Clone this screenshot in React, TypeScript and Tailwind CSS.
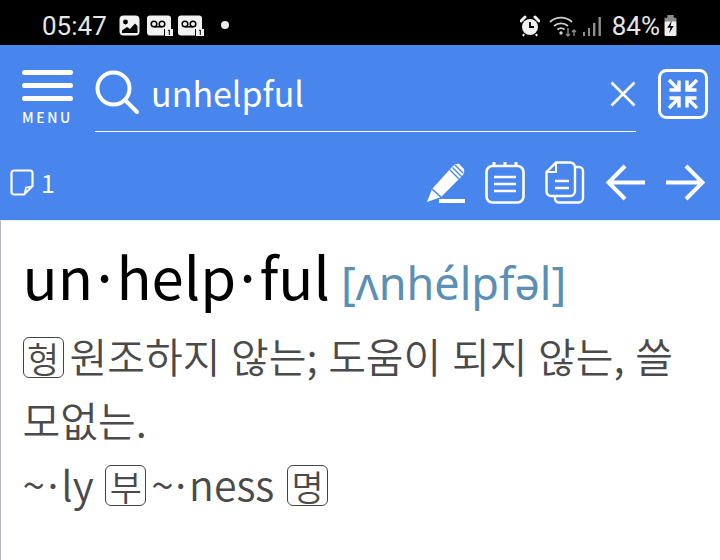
function Tag({ children }: { children: string }) {
  return (
    <span className="inline-flex items-center justify-center w-[41px] h-[41px] border-[1.5px] border-[#444444] rounded-[6px] text-[35px] leading-none align-[0px] text-[#4a4a4a]">
      {children}
    </span>
  );
}

function Voicemail() {
  return (
    <svg width="26" height="21" viewBox="0 0 26 21" className="-mr-[2px]">
      <path d="M3 0.5 H21 a3 3 0 0 1 3 3 V14 H17 V20.5 H3 a3 3 0 0 1 -3 -3 V3.5 a3 3 0 0 1 3 -3 Z" fill="#f2f2f2" />
      <circle cx="7" cy="9" r="2.8" fill="none" stroke="#000" strokeWidth="1.5" />
      <circle cx="15" cy="9" r="2.8" fill="none" stroke="#000" strokeWidth="1.5" />
      <path d="M7 11.8 H15" stroke="#000" strokeWidth="1.5" />
      <rect x="18" y="14" width="8" height="7" fill="#f2f2f2" />
      <path d="M21 15.5 L22.3 15 V20" stroke="#000" strokeWidth="1" fill="none" />
    </svg>
  );
}

function StatusIcons() {
  return (
    <div className="flex items-center gap-[7px] ml-[12px] mt-[5px]">
      <svg width="21" height="21" viewBox="0 0 21 21">
        <rect x="0.5" y="0.5" width="20" height="20" rx="4" fill="#f2f2f2" />
        <circle cx="6.5" cy="7" r="2.4" fill="#000" />
        <path d="M3 18 V15.5 L8 12 L11 14 L16 8.5 L18.5 11 V18 Z" fill="#000" />
      </svg>
      <Voicemail />
      <Voicemail />
      <div className="w-[8px] h-[8px] rounded-full bg-[#eeeeee] ml-[12px] -mt-[1px]" />
    </div>
  );
}

function Right() {
  return (
    <div className="flex items-center mt-[7px]">
      <svg width="20" height="22" viewBox="0 0 20 22" fill="none">
        <circle cx="10" cy="12" r="8" fill="#f2f2f2" />
        <path d="M10 7 V12 H14" stroke="#000" strokeWidth="1.8" />
        <path d="M1 6 L5 2 M19 6 L15 2" stroke="#f2f2f2" strokeWidth="3" strokeLinecap="round" />
        <path d="M4 19 L3 21 M16 19 L17 21" stroke="#f2f2f2" strokeWidth="2" />
      </svg>
      <svg width="28" height="22" viewBox="0 0 28 22" fill="none" className="ml-[9px]">
        <path d="M1 7 A16 16 0 0 1 23 7" stroke="#cfcfcf" strokeWidth="1.8" />
        <path d="M5 11 A10.5 10.5 0 0 1 19 11" stroke="#cfcfcf" strokeWidth="1.8" />
        <path d="M8.5 14.5 A5.5 5.5 0 0 1 15.5 14.5" stroke="#cfcfcf" strokeWidth="1.8" />
        <circle cx="12" cy="18" r="1.7" fill="#cfcfcf" />
        <path d="M19 13 V21 M17 19 L19 21 L21 19" stroke="#8a8a8a" strokeWidth="1.4" />
        <path d="M25 21 V15 M23 17 L25 15 L27 17" stroke="#8a8a8a" strokeWidth="1.4" />
      </svg>
      <svg width="19" height="21" viewBox="0 0 19 21" className="ml-[6px]" fill="#8f8f8f">
        <rect x="0" y="16" width="2" height="4" />
        <rect x="5" y="12" width="2" height="8" />
        <rect x="10" y="7" width="2.4" height="13" />
        <rect x="15.5" y="1" width="2.4" height="19" />
      </svg>
      <span className="ml-[10px] text-[26px] leading-none text-[#e6e6e6] font-['Roboto',sans-serif]">84%</span>
      <svg width="15" height="22" viewBox="0 0 15 24" className="ml-[3px]">
        <rect x="4" y="0" width="7" height="4" fill="#8c8c8c" />
        <rect x="1" y="3" width="13" height="5" fill="#8c8c8c" />
        <rect x="1" y="7" width="13" height="16" rx="1.5" fill="#f0f0f0" />
        <path d="M9 6 L4 14 H7.5 L6 20 L11 12 H7.5 Z" fill="#000" />
      </svg>
    </div>
  );
}

function Dot() {
  return <span className="inline-block -mx-[0.08em]">·</span>;
}

export default function App() {
  return (
    <div className="w-[720px] h-[560px] overflow-hidden bg-white font-['Noto_Sans_CJK_KR','Noto_Sans',sans-serif]">
      <div className="h-[45px] bg-black flex items-center justify-between pl-[42px] pr-[42px]">
        <div className="flex items-center">
          <span className="text-[26px] leading-none text-[#e6e6e6] font-['Roboto',sans-serif] mt-[7px]">05:47</span>
          <StatusIcons />
        </div>
        <Right />
      </div>

      <div className="h-[175px] bg-[#4885ed] text-white flex flex-col">
        <div className="flex items-start pl-[22px] pr-[12px] pt-[24px]">
          <div className="w-[51px] flex flex-col items-center shrink-0 pt-[1px]">
            <div className="w-[51px] h-[5px] rounded-full bg-white" />
            <div className="w-[51px] h-[5px] rounded-full bg-white mt-[8px]" />
            <div className="w-[51px] h-[5px] rounded-full bg-white mt-[8px]" />
            <div className="text-[14px] leading-none tracking-[2.6px] mt-[9px] font-medium">MENU</div>
          </div>
          <div className="ml-[22px] w-[541px] h-[63px] border-b border-white flex items-start shrink-0">
            <svg width="44" height="44" viewBox="0 0 44 44" fill="none" className="mt-[1px] shrink-0">
              <circle cx="18.5" cy="18.5" r="16" stroke="#fff" strokeWidth="4" />
              <path d="M30 30 L42 42" stroke="#fff" strokeWidth="4" strokeLinecap="round" />
            </svg>
            <span className="ml-[12px] text-[34px] leading-[48px]">unhelpful</span>
            <svg width="26" height="26" viewBox="0 0 26 26" fill="none" className="ml-auto mt-[12px] shrink-0">
              <path d="M1.5 1.5 L24.5 24.5 M24.5 1.5 L1.5 24.5" stroke="#fff" strokeWidth="2.6" />
            </svg>
          </div>
          <svg width="50" height="50" viewBox="0 0 50 50" fill="none" className="ml-[22px] shrink-0">
            <rect x="1.5" y="1.5" width="47" height="47" rx="7" stroke="#fff" strokeWidth="3" />
            <path d="M11 11 L21 21 M21 11.5 V21 H11.5" stroke="#fff" strokeWidth="3.4" />
            <path d="M39 11 L29 21 M29 11.5 V21 H38.5" stroke="#fff" strokeWidth="3.4" />
            <path d="M11 39 L21 29 M21 38.5 V29 H11.5" stroke="#fff" strokeWidth="3.4" />
            <path d="M39 39 L29 29 M29 38.5 V29 H38.5" stroke="#fff" strokeWidth="3.4" />
          </svg>
        </div>

        <div className="flex items-center justify-between pl-[10px] pr-[15px] mt-[29px]">
          <div className="flex items-center">
            <svg width="24" height="27" viewBox="0 0 24 27" fill="none">
              <path d="M4 1.5 H20 a2.5 2.5 0 0 1 2.5 2.5 V17 L14 25.5 H4 a2.5 2.5 0 0 1 -2.5 -2.5 V4 A2.5 2.5 0 0 1 4 1.5 Z" stroke="#fff" strokeWidth="2.2" />
              <path d="M22 17.5 L16 18.5 L14.5 25" stroke="#fff" strokeWidth="1.6" />
            </svg>
            <span className="ml-[7px] text-[25px] leading-none">1</span>
          </div>
          <div className="flex items-center">
            <svg width="40" height="42" viewBox="0 0 40 42">
              <path d="M1 40 L6 27 L27 4 Q30 1 33 2 L38 7 Q39 10 37 13 L15 35 Z" fill="#fff" />
              <path d="M6 27 L15 35" stroke="#4885ed" strokeWidth="1.6" />
              <path d="M24 8 L33 17 M26.5 5.5 L35.5 14.5 M29 3 L37 11" stroke="#4885ed" strokeWidth="1.4" />
              <rect x="13" y="37" width="26" height="4" fill="#fff" />
            </svg>
            <svg width="40" height="43" viewBox="0 0 40 43" fill="none" className="ml-[19px]">
              <rect x="1.5" y="5" width="37" height="36.5" rx="6" stroke="#fff" strokeWidth="2.6" />
              <path d="M9 1 V6 M20 1 V6 M31 1 V6" stroke="#fff" strokeWidth="3" />
              <path d="M9 16 H31 M9 23 H31 M9 30 H31" stroke="#fff" strokeWidth="2.6" />
            </svg>
            <svg width="40" height="43" viewBox="0 0 40 43" fill="none" className="ml-[20px]">
              <path d="M30 6 H34 a4 4 0 0 1 4 4 V37 a4.5 4.5 0 0 1 -4.5 4.5 H14 a4 4 0 0 1 -4 -4 V35" stroke="#fff" strokeWidth="2.4" />
              <path d="M11 1.5 H25 a5 5 0 0 1 5 5 V30 a5 5 0 0 1 -5 5 H6 a4.5 4.5 0 0 1 -4.5 -4.5 V11 Z" stroke="#fff" strokeWidth="2.4" />
              <path d="M11 1.5 V11 H1.5" stroke="#fff" strokeWidth="2" />
              <path d="M10 20 H24 M10 27 H24" stroke="#fff" strokeWidth="2.4" />
            </svg>
            <svg width="40" height="37" viewBox="0 0 40 37" fill="none" className="ml-[21px]">
              <path d="M39 18.5 H3 M19 2 L2.5 18.5 L19 35" stroke="#fff" strokeWidth="4" />
            </svg>
            <svg width="40" height="37" viewBox="0 0 40 37" fill="none" className="ml-[19px]">
              <path d="M1 18.5 H37 M21 2 L37.5 18.5 L21 35" stroke="#fff" strokeWidth="4" />
            </svg>
          </div>
        </div>
      </div>

      <div className="h-[340px] border-l-[1.5px] border-[#b5b5bd] pl-[21.5px] pr-[20px] border-t border-t-[#e6f6fb]">
        <div className="mt-[16px] flex items-baseline h-[76px] whitespace-nowrap">
          <span className="text-[58px] leading-[76px] text-black">un<Dot />help<Dot />ful</span>
          <span className="ml-[11px] text-[45px] leading-[76px] text-[#5b8fb3] font-['Noto_Sans',sans-serif]">[ʌnhélpfəl]</span>
        </div>
        <div className="text-[41px] font-[350] [word-spacing:1.5px] leading-[64px] text-[#4a4a4a] mt-[10px] whitespace-nowrap">
          <Tag>형</Tag><span className="ml-[6px]">원조하지 않는; 도움이 되지 않는, 쓸</span>
          <br />
          모없는.
          <br />
          ~<Dot />ly <span className="ml-[1px]"><Tag>부</Tag></span><span className="ml-[5px]">~</span><span className="-ml-[1px]"><Dot /></span>ness <span className="ml-[2px]"><Tag>명</Tag></span>
        </div>
      </div>
    </div>
  );
}
